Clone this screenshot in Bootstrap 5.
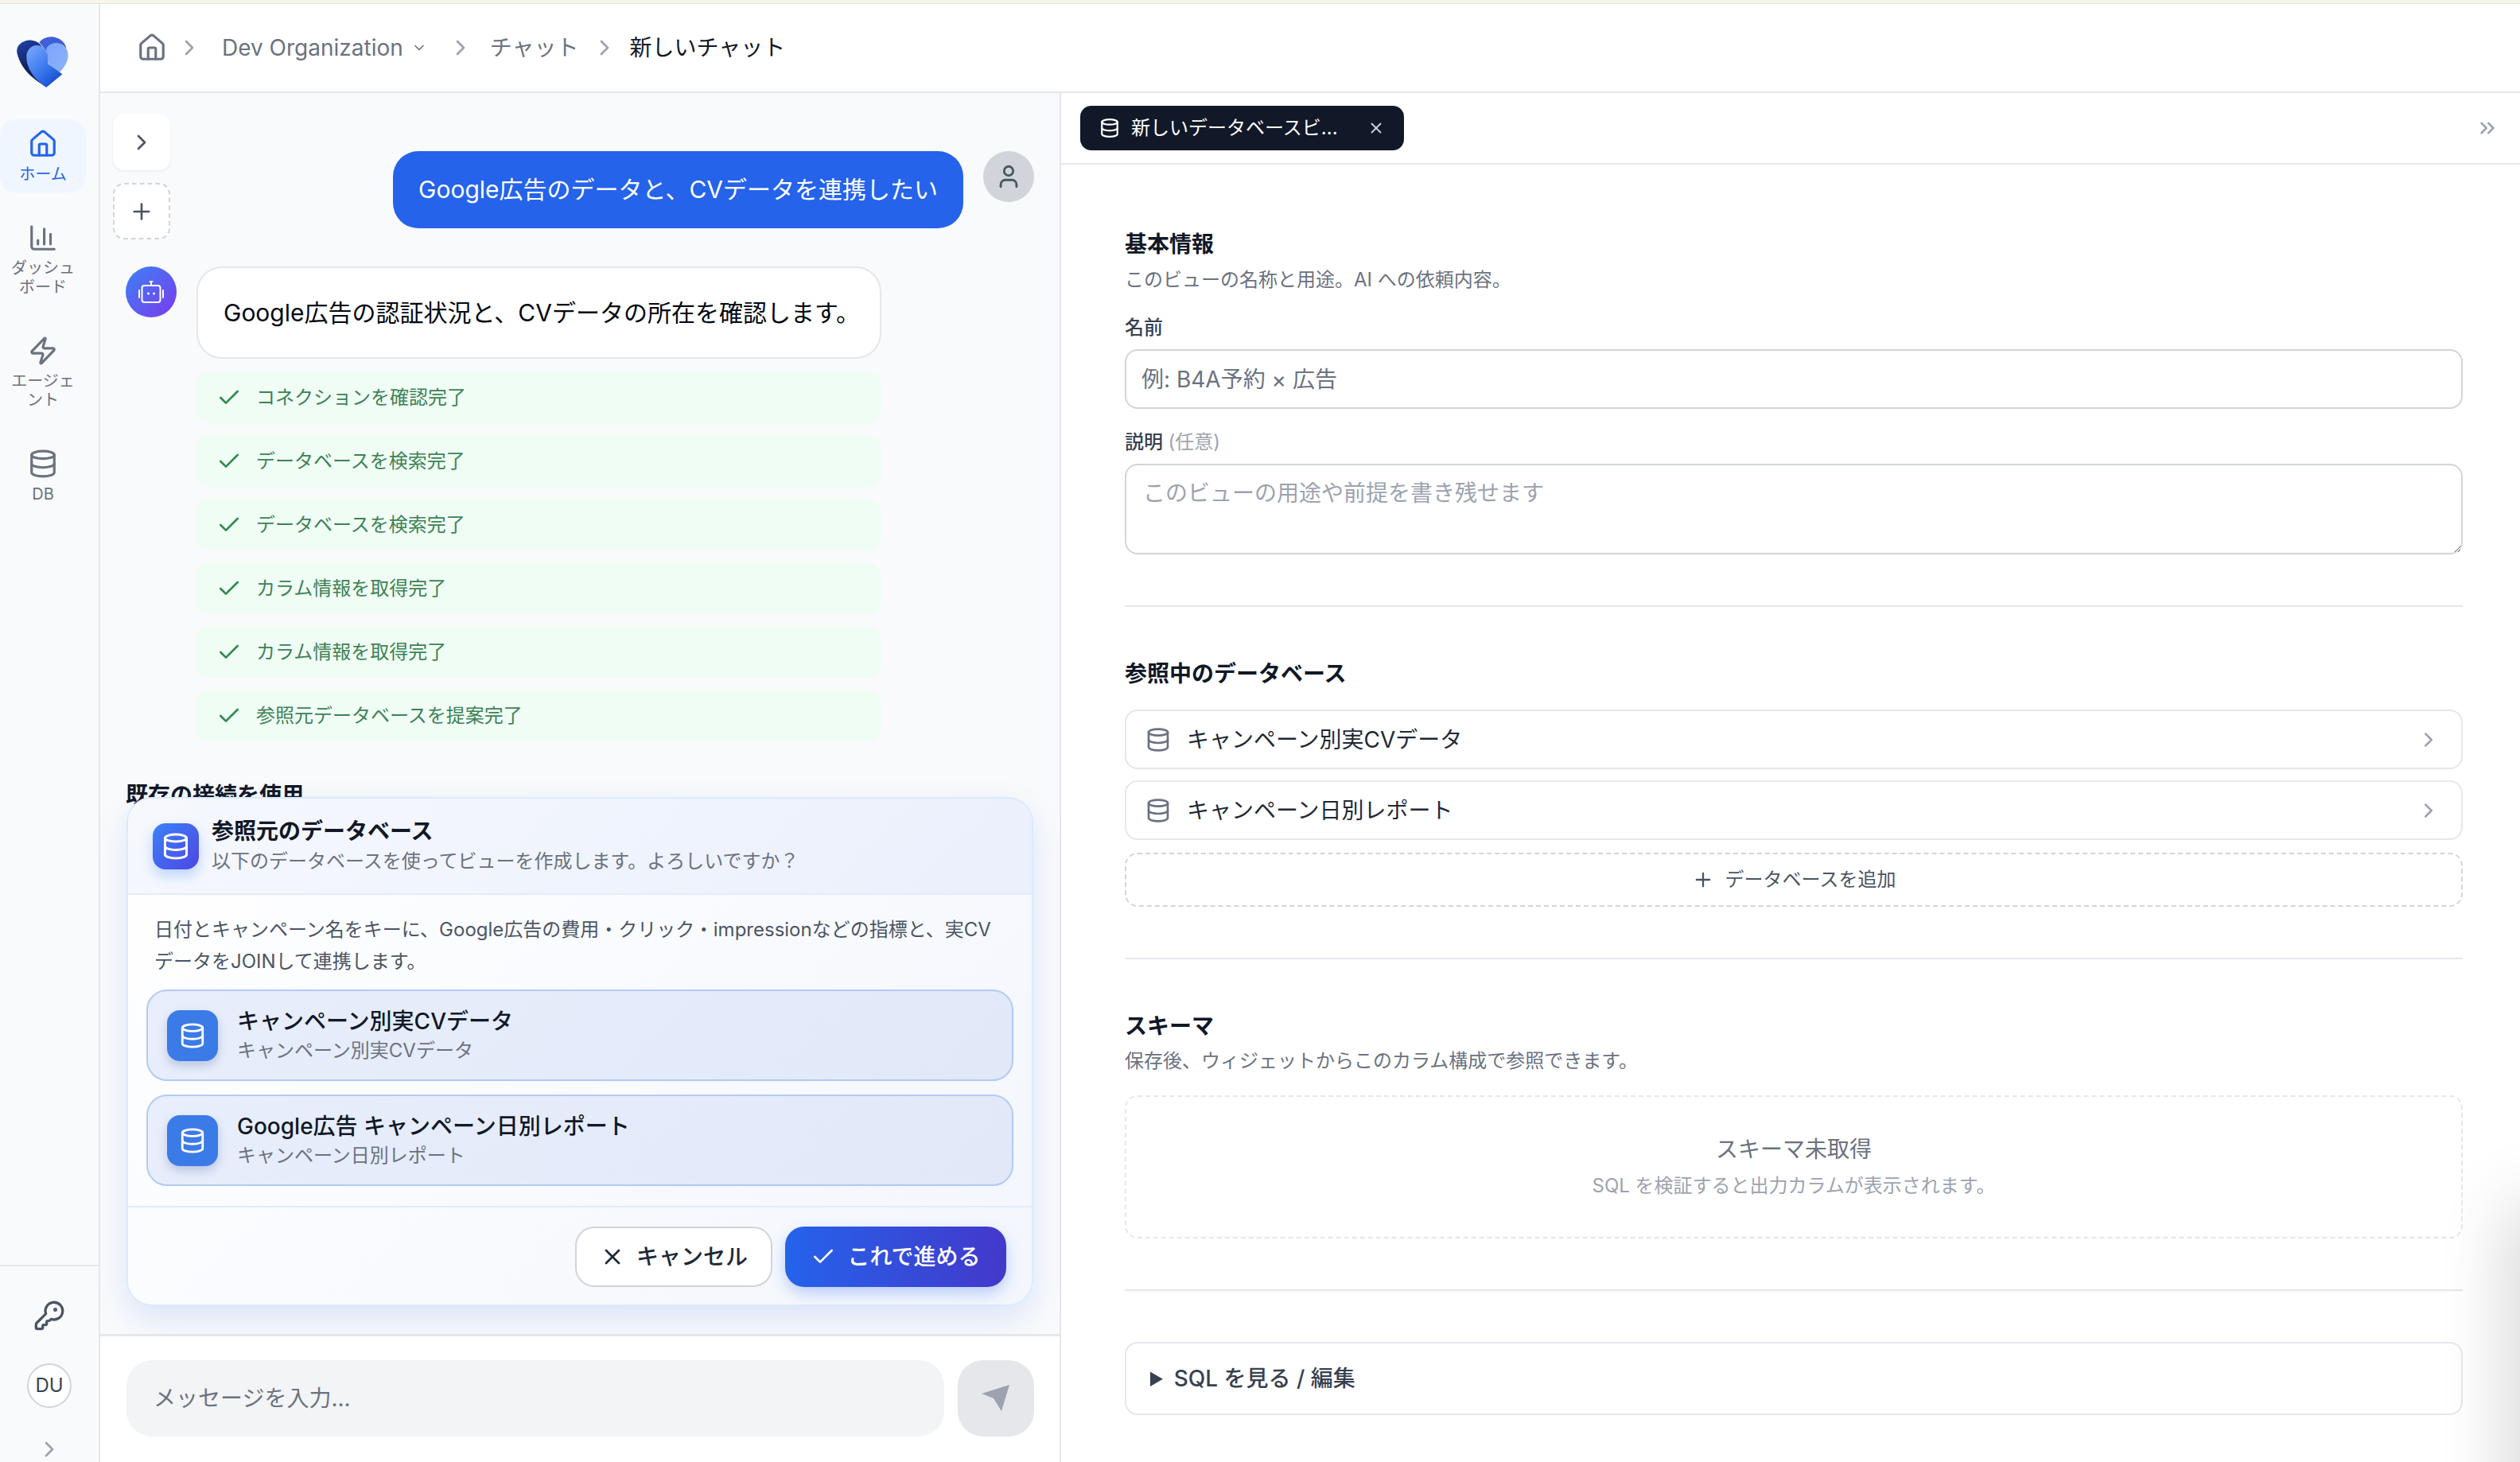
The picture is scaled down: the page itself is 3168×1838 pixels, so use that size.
<!DOCTYPE html>
<html lang="ja">
<head>
  <meta charset="UTF-8" />
  <meta name="viewport" content="width=device-width, initial-scale=1.0" />
  <title>新しいチャット</title>
  <link href="https://cdn.jsdelivr.net/npm/bootstrap@5.3.3/dist/css/bootstrap.min.css" rel="stylesheet">
  <style>
    html, body { height: 100%; }
    body { font-family: Inter, "Noto Sans CJK JP", sans-serif; color: #111827; background: #fff; overflow: hidden; font-size: 28px; }
    svg.ico { fill: none; stroke: currentColor; stroke-width: 2; stroke-linecap: round; stroke-linejoin: round; flex: none; }

    .top-strip { height: 5px; background: #f6f7ea; border-bottom: 1px solid #e3e4d4; flex: none; }
    .app-shell { height: 1833px; }

    /* left rail */
    .side-rail { width: 126px; flex: none; background: #f9fafb; border-right: 2px solid #e5e7eb; }
    .rail-logo { height: 145px; padding: 31px 0 0 10px; }
    .rail-nav { gap: 26px; }
    .rail-link { width: 108px; padding: 14px 12px 11px; gap: 9px; border-radius: 20px; color: #6b7280; font-size: 20px; line-height: 24px; text-align: center; text-decoration: none; }
    .rail-link.is-active { background: #eff6ff; color: #2563eb; }
    .rail-foot { border-top: 2px solid #e5e7eb; padding-top: 42px; color: #4b5563; }
    .rail-avatar { width: 56px; height: 56px; border: 2px solid #d1d5db; background: #fff; border-radius: 50%; font-size: 24px; color: #374151; margin: 40px 0 36px; }
    .rail-more { color: #9ca3af; }

    /* header */
    .page-head { height: 112px; flex: none; background: #fff; border-bottom: 2px solid #e5e7eb; padding-left: 46px; color: #6b7280; }
    .crumb-sep { color: #9ca3af; }
    .crumb-now { color: #111827; }
    .crumb-a { margin: 0 25px 0 12px; }
    .crumb-b { margin: 0 21px 0 26px; }
    .crumb-c { margin: 0 16px; }
    .crumb-caret { margin-left: 10px; }

    /* chat pane */
    .chat-pane { width: 1208px; flex: none; border-right: 2px solid #e5e7eb; background: #f9fafb; }
    .chat-scroll { padding: 73px 32px 0; overflow: hidden; }
    .float-btn { position: absolute; left: 16px; width: 72px; height: 71px; background: #fff; border-radius: 14px; color: #4b5563; box-shadow: 0 1px 3px rgba(0,0,0,.08); }
    .float-toggle { top: 26px; }
    .float-add { top: 113px; border: 2px dashed #d1d5db; box-shadow: none; }
    .user-row { gap: 25px; margin-bottom: 48px; }
    .user-bubble { height: 97px; padding: 0 32px; background: #2563eb; color: #fff; border-radius: 32px; font-size: 30px; white-space: nowrap; }
    .round-face { width: 64px; height: 64px; border-radius: 50%; flex: none; }
    .face-user { background: #d1d5db; color: #4b5563; }
    .face-bot { background: linear-gradient(135deg, #3b82f6, #7c3aed); color: #fff; }
    .bot-col { width: 861px; margin-left: 25px; }
    .bot-bubble { height: 116px; padding: 0 32px; background: #fff; border: 2px solid #e5e7eb; border-radius: 32px; font-size: 30px; color: #030712; white-space: nowrap; margin-bottom: 17px; }
    .step-row { height: 64px; margin-bottom: 16px; padding-left: 25px; gap: 18px; background: #f0fdf4; border-radius: 16px; font-size: 24px; color: #3d8257; }
    .step-row svg { color: #2e8b4f; }
    .used-label { font-size: 28px; font-weight: 700; line-height: 42px; margin-top: 31px; }

    /* proposal card */
    .pick-card { position: absolute; left: 33px; right: 33px; bottom: 35px; height: 640px; border: 2px solid #dbeafe; border-radius: 32px; overflow: visible; background: linear-gradient(135deg, #fff, #f3f6fd); box-shadow: 0 16px 40px rgba(37,99,235,.14); }
    .pick-head { height: 121px; padding: 0 31px; gap: 16px; flex: none; border-bottom: 2px solid #e3ebfb; border-radius: 30px 30px 0 0; background: linear-gradient(135deg, #f6f8fe, #eaf0fc); }
    .pick-badge { width: 58px; height: 58px; border-radius: 16px; flex: none; color: #fff; background: linear-gradient(135deg, #3b82f6, #4f46e5); box-shadow: 0 8px 16px rgba(59,130,246,.3); }
    .pick-title { font-size: 28px; font-weight: 700; line-height: 38px; }
    .pick-sub { font-size: 24px; line-height: 38px; color: #6b7280; }
    .pick-desc { font-size: 24px; line-height: 40px; color: #4b5563; margin: 24px 0 15px 10px; width: 1075px; }
    .pick-body { padding: 0 23px; }
    .source-row { height: 115px; margin-bottom: 17px; padding: 0 24px; gap: 24px; border: 2px solid #b2cbf6; border-radius: 26px; background: linear-gradient(135deg, #e8eefb, #e1e8f8); }
    .source-badge { width: 64px; height: 64px; border-radius: 16px; flex: none; color: #fff; background: #3b7be8; box-shadow: 0 6px 12px rgba(30,58,138,.22); }
    .source-name { font-size: 28px; line-height: 38px; font-weight: 500; color: #111827; }
    .source-sub { font-size: 24px; line-height: 36px; color: #6b7280; }
    .pick-foot { margin-top: 8px; padding: 24px 32px; gap: 16px; border-top: 2px solid #e3ebfb; }
    .btn.pick-cancel, .btn.pick-go { height: 76px; font-size: 28px; font-weight: 500; border-radius: 24px; padding: 0; gap: 14px; }
    .btn.pick-cancel { width: 248px; background: #fff; border: 2px solid #d1d5db; color: #1f2937; }
    .btn.pick-go { width: 278px; border: 0; color: #fff; background: linear-gradient(90deg, #2563eb, #4338ca); box-shadow: 0 8px 18px rgba(37,99,235,.28); }

    /* composer */
    .composer { height: 161px; flex: none; padding: 30px 32px 0 33px; gap: 17px; background: #fff; border-top: 3px solid #e5e7eb; }
    .form-control.composer-input { height: 96px; border: 0; border-radius: 32px; background: #f3f4f6; font-size: 28px; padding: 0 34px; }
    .composer-input::placeholder { color: #6b7280; }
    .composer-send { width: 96px; height: 96px; flex: none; border-radius: 32px; background: #e5e7eb; }

    /* right pane */
    .view-pane { background: #fff; }
    .tab-bar { height: 90px; flex: none; padding: 0 26px 0 24px; border-bottom: 2px solid #e5e7eb; color: #9ca3af; }
    .view-tab { width: 407px; height: 56px; padding: 0 24px; background: #111827; color: #fff; border-radius: 14px; font-size: 24px; gap: 14px; }
    .view-tab-x { color: #d1d5db; margin-left: auto; }
    .view-body { padding: 16px 72px 0 80px; }
    .form-block { padding: 64px 0; border-bottom: 2px solid #e5e7eb; }
    .block-title { font-size: 28px; font-weight: 700; line-height: 40px; margin: 0; color: #111827; }
    .block-sub { font-size: 24px; line-height: 36px; color: #6b7280; margin: 7px 0 0; }
    .form-label.field-label { font-size: 24px; line-height: 36px; color: #374151; font-weight: 500; margin: 24px 0 9px; }
    .field-opt { color: #9ca3af; font-weight: 400; }
    .form-control.field-input { border: 2px solid #d1d5db; border-radius: 16px; font-size: 28px; height: 75px; padding: 0 19px; color: #111827; }
    .form-control.field-area { height: 114px; padding: 14px 21px; }
    .field-input::placeholder { color: #6b7280; }
    .field-area::placeholder { color: #9ca3af; }
    .db-list { margin-top: 25px; gap: 14px; }
    .db-row { height: 75px; padding: 0 26px 0 24px; gap: 20px; border: 2px solid #e5e7eb; border-radius: 16px; font-size: 28px; color: #1f2937; background: #fff; }
    .db-row > svg:first-child { color: #6b7280; }
    .db-chev { color: #9ca3af; margin-left: auto; }
    .db-add { height: 68px; margin-top: 16px; gap: 14px; border: 2px dashed #d1d5db; border-radius: 16px; font-size: 24px; color: #4b5563; }
    .schema-empty { height: 180px; margin-top: 25px; border: 2px dashed #e5e7eb; border-radius: 16px; }
    .schema-none { font-size: 28px; line-height: 40px; color: #6b7280; }
    .schema-hint { font-size: 24px; line-height: 36px; margin-top: 8px; color: #9ca3af; }
    .sql-box { margin-top: 64px; height: 92px; padding: 0 30px; border: 2px solid #e5e7eb; border-radius: 16px; font-size: 28px; font-weight: 500; color: #374151; line-height: 88px; }
    .edge-shade { position: absolute; right: -40px; top: 1400px; bottom: -200px; width: 40px; box-shadow: 0 0 90px rgba(0,0,0,.3); }
  </style>
</head>
<body class="d-flex flex-column">
<div class="top-strip"></div>
<div class="app-shell d-flex">

  <!-- Rail -->
  <aside class="side-rail d-flex flex-column">
    <div class="rail-logo">
      <svg width="90" height="84" viewBox="0 0 270 252">
        <defs>
          <linearGradient id="lgDark" x1="0.2" y1="0" x2="0.6" y2="1"><stop offset="0" stop-color="#1e3fa8"/><stop offset="0.5" stop-color="#13265f"/><stop offset="1" stop-color="#0f1d4a"/></linearGradient>
          <linearGradient id="lgFront" x1="0.1" y1="0.1" x2="0.8" y2="1"><stop offset="0" stop-color="#6fa2fb"/><stop offset="0.6" stop-color="#3470ea"/><stop offset="1" stop-color="#0f46c4"/></linearGradient>
          <linearGradient id="lgRight" x1="0" y1="0" x2="1" y2="1"><stop offset="0" stop-color="#7aa5f9"/><stop offset="1" stop-color="#8fb3fc"/></linearGradient>
        </defs>
        <path fill="#3f5fd8" d="M118 52C130 35 160 25 185 35C205 42 215 55 220 72L150 90Z"/>
        <path fill="url(#lgDark)" d="M34 90C30 60 60 42 90 44C110 46 122 58 130 70L150 130L145 220C110 200 48 160 34 90Z"/>
        <path fill="url(#lgRight)" d="M145 74C165 42 225 48 227 100C228 125 210 150 192 168L150 130Z"/>
        <path fill="url(#lgFront)" d="M70 110C68 80 90 60 112 63C135 66 150 85 150 105L150 132L205 172L145 221C120 205 72 165 70 110Z"/>
      </svg>
    </div>
    <nav class="rail-nav d-flex flex-column">
      <a class="rail-link is-active d-flex flex-column align-items-center" href="#">
        <svg class="ico" width="38" height="38" viewBox="0 0 24 24" style="margin:-2px 0"><path d="M15 21v-8a1 1 0 0 0-1-1h-4a1 1 0 0 0-1 1v8"/><path d="M3 10a2 2 0 0 1 .709-1.528l7-5.999a2 2 0 0 1 2.582 0l7 5.999A2 2 0 0 1 21 10v9a2 2 0 0 1-2 2H5a2 2 0 0 1-2-2z"/></svg>
        <span>ホーム</span>
      </a>
      <a class="rail-link d-flex flex-column align-items-center" href="#">
        <svg class="ico" width="38" height="38" viewBox="0 0 24 24" style="margin:-2px 0"><path d="M3 3v16a2 2 0 0 0 2 2h16"/><path d="M18 17V9"/><path d="M13 17V5"/><path d="M8 17v-3"/></svg>
        <span>ダッシュボード</span>
      </a>
      <a class="rail-link d-flex flex-column align-items-center" href="#">
        <svg class="ico" width="38" height="38" viewBox="0 0 24 24" style="margin:-2px 0"><path d="M4 14a1 1 0 0 1-.78-1.63l9.9-10.2a.5.5 0 0 1 .86.46l-1.92 6.02A1 1 0 0 0 13 10h7a1 1 0 0 1 .78 1.63l-9.9 10.2a.5.5 0 0 1-.86-.46l1.92-6.02A1 1 0 0 0 11 14z"/></svg>
        <span>エージェント</span>
      </a>
      <a class="rail-link d-flex flex-column align-items-center" href="#">
        <svg class="ico" width="38" height="38" viewBox="0 0 24 24" style="margin:-2px 0"><ellipse cx="12" cy="5" rx="9" ry="3"/><path d="M3 5v14a9 3 0 0 0 18 0V5"/><path d="M3 12a9 3 0 0 0 18 0"/></svg>
        <span>DB</span>
      </a>
    </nav>
    <div class="rail-foot mt-auto d-flex flex-column align-items-center">
      <svg class="ico" width="40" height="40" viewBox="0 0 24 24"><path d="M2.586 17.414A2 2 0 0 0 2 18.828V21a1 1 0 0 0 1 1h3a1 1 0 0 0 1-1v-1a1 1 0 0 1 1-1h1a1 1 0 0 0 1-1v-1a1 1 0 0 1 1-1h.172a2 2 0 0 0 1.414-.586l.814-.814a6.5 6.5 0 1 0-4-4z"/><circle cx="16.5" cy="7.5" r=".5" fill="currentColor"/></svg>
      <div class="rail-avatar d-flex align-items-center justify-content-center">DU</div>
      <svg class="ico rail-more" width="32" height="32" viewBox="0 0 24 24"><path d="m9 18 6-6-6-6"/></svg>
    </div>
  </aside>

  <main class="flex-grow-1 d-flex flex-column" style="min-width:0">
    <!-- Breadcrumb -->
    <header class="page-head d-flex align-items-center">
      <svg class="ico" width="38" height="38" viewBox="0 0 24 24" stroke-width="1.6"><path d="M15 21v-8a1 1 0 0 0-1-1h-4a1 1 0 0 0-1 1v8"/><path d="M3 10a2 2 0 0 1 .709-1.528l7-5.999a2 2 0 0 1 2.582 0l7 5.999A2 2 0 0 1 21 10v9a2 2 0 0 1-2 2H5a2 2 0 0 1-2-2z"/></svg>
      <svg class="ico crumb-sep crumb-a" width="32" height="32" viewBox="0 0 24 24"><path d="m9 18 6-6-6-6"/></svg>
      <span>Dev Organization</span>
      <svg class="ico crumb-caret" width="20" height="20" viewBox="0 0 24 24"><path d="m6 9 6 6 6-6"/></svg>
      <svg class="ico crumb-sep crumb-b" width="32" height="32" viewBox="0 0 24 24"><path d="m9 18 6-6-6-6"/></svg>
      <span>チャット</span>
      <svg class="ico crumb-sep crumb-c" width="32" height="32" viewBox="0 0 24 24"><path d="m9 18 6-6-6-6"/></svg>
      <span class="crumb-now">新しいチャット</span>
    </header>

    <div class="flex-grow-1 d-flex" style="min-height:0">
      <!-- Chat -->
      <section class="chat-pane d-flex flex-column">
        <div class="chat-scroll flex-grow-1 position-relative">
          <div class="float-btn float-toggle d-flex align-items-center justify-content-center">
            <svg class="ico" width="32" height="32" viewBox="0 0 24 24"><path d="m9 18 6-6-6-6"/></svg>
          </div>
          <div class="float-btn float-add d-flex align-items-center justify-content-center">
            <svg class="ico" width="32" height="32" viewBox="0 0 24 24"><path d="M5 12h14"/><path d="M12 5v14"/></svg>
          </div>

          <div class="user-row d-flex justify-content-end">
            <div class="user-bubble d-flex align-items-center">Google広告のデータと、CVデータを連携したい</div>
            <div class="round-face face-user d-flex align-items-center justify-content-center">
              <svg class="ico" width="34" height="34" viewBox="0 0 24 24" stroke-width="1.6"><path d="M19 21v-2a4 4 0 0 0-4-4H9a4 4 0 0 0-4 4v2"/><circle cx="12" cy="7" r="4"/></svg>
            </div>
          </div>

          <div class="d-flex">
            <div class="round-face face-bot d-flex align-items-center justify-content-center">
              <svg class="ico" width="32" height="32" viewBox="0 0 32 32"><rect x="4.5" y="8" width="23" height="21" rx="3"/><path d="M16 8V3"/><path d="M14 3h4" stroke-width="1.5"/><path d="M1 14v9"/><path d="M31 14v9"/><circle cx="12.5" cy="18" r="1.5" fill="currentColor" stroke="none"/><circle cx="19.5" cy="18" r="1.5" fill="currentColor" stroke="none"/></svg>
            </div>
            <div class="bot-col">
              <div class="bot-bubble d-flex align-items-center">Google広告の認証状況と、CVデータの所在を確認します。</div>
              <div class="step-row d-flex align-items-center"><svg class="ico" width="32" height="32" viewBox="0 0 24 24"><path d="M20 6 9 17l-5-5"/></svg>コネクションを確認完了</div>
              <div class="step-row d-flex align-items-center"><svg class="ico" width="32" height="32" viewBox="0 0 24 24"><path d="M20 6 9 17l-5-5"/></svg>データベースを検索完了</div>
              <div class="step-row d-flex align-items-center"><svg class="ico" width="32" height="32" viewBox="0 0 24 24"><path d="M20 6 9 17l-5-5"/></svg>データベースを検索完了</div>
              <div class="step-row d-flex align-items-center"><svg class="ico" width="32" height="32" viewBox="0 0 24 24"><path d="M20 6 9 17l-5-5"/></svg>カラム情報を取得完了</div>
              <div class="step-row d-flex align-items-center"><svg class="ico" width="32" height="32" viewBox="0 0 24 24"><path d="M20 6 9 17l-5-5"/></svg>カラム情報を取得完了</div>
              <div class="step-row d-flex align-items-center"><svg class="ico" width="32" height="32" viewBox="0 0 24 24"><path d="M20 6 9 17l-5-5"/></svg>参照元データベースを提案完了</div>
            </div>
          </div>
          <div class="used-label">既存の接続を使用</div>

          <!-- Proposal sits over the chat log -->
          <div class="card pick-card">
            <div class="pick-head d-flex align-items-center">
              <div class="pick-badge d-flex align-items-center justify-content-center">
                <svg class="ico" width="36" height="36" viewBox="0 0 24 24"><ellipse cx="12" cy="5" rx="9" ry="3"/><path d="M3 5v14a9 3 0 0 0 18 0V5"/><path d="M3 12a9 3 0 0 0 18 0"/></svg>
              </div>
              <div>
                <div class="pick-title">参照元のデータベース</div>
                <div class="pick-sub">以下のデータベースを使ってビューを作成します。よろしいですか？</div>
              </div>
            </div>
            <div class="pick-body">
              <p class="pick-desc">日付とキャンペーン名をキーに、Google広告の費用・クリック・impressionなどの指標と、実CVデータをJOINして連携します。</p>
              <div class="source-row d-flex align-items-center">
                <div class="source-badge d-flex align-items-center justify-content-center">
                  <svg class="ico" width="34" height="34" viewBox="0 0 24 24"><ellipse cx="12" cy="5" rx="9" ry="3"/><path d="M3 5v14a9 3 0 0 0 18 0V5"/><path d="M3 12a9 3 0 0 0 18 0"/></svg>
                </div>
                <div>
                  <div class="source-name">キャンペーン別実CVデータ</div>
                  <div class="source-sub">キャンペーン別実CVデータ</div>
                </div>
              </div>
              <div class="source-row d-flex align-items-center">
                <div class="source-badge d-flex align-items-center justify-content-center">
                  <svg class="ico" width="34" height="34" viewBox="0 0 24 24"><ellipse cx="12" cy="5" rx="9" ry="3"/><path d="M3 5v14a9 3 0 0 0 18 0V5"/><path d="M3 12a9 3 0 0 0 18 0"/></svg>
                </div>
                <div>
                  <div class="source-name">Google広告 キャンペーン日別レポート</div>
                  <div class="source-sub">キャンペーン日別レポート</div>
                </div>
              </div>
            </div>
            <div class="pick-foot d-flex justify-content-end">
              <button class="btn pick-cancel d-flex align-items-center justify-content-center" type="button"><svg class="ico" width="32" height="32" viewBox="0 0 24 24"><path d="M18 6 6 18"/><path d="m6 6 12 12"/></svg>キャンセル</button>
              <button class="btn pick-go d-flex align-items-center justify-content-center" type="button"><svg class="ico" width="32" height="32" viewBox="0 0 24 24"><path d="M20 6 9 17l-5-5"/></svg>これで進める</button>
            </div>
          </div>
        </div>

        <div class="composer d-flex">
          <input class="form-control composer-input" type="text" placeholder="メッセージを入力...">
          <div class="composer-send d-flex align-items-center justify-content-center">
            <svg width="36" height="34" viewBox="0 0 36 34"><path fill="#9ca3af" d="M35 0 0 11l15 6 10 16Z"/></svg>
          </div>
        </div>
      </section>

      <!-- View editor -->
      <section class="view-pane flex-grow-1 d-flex flex-column position-relative" style="min-width:0">
        <div class="tab-bar d-flex align-items-center justify-content-between">
          <div class="view-tab d-flex align-items-center">
            <svg class="ico" width="26" height="26" viewBox="0 0 24 24"><ellipse cx="12" cy="5" rx="9" ry="3"/><path d="M3 5v14a9 3 0 0 0 18 0V5"/><path d="M3 12a9 3 0 0 0 18 0"/></svg>
            <span>新しいデータベースビ...</span>
            <svg class="ico view-tab-x" width="22" height="22" viewBox="0 0 24 24"><path d="M18 6 6 18"/><path d="m6 6 12 12"/></svg>
          </div>
          <svg class="ico" width="30" height="30" viewBox="0 0 24 24"><path d="m6 17 5-5-5-5"/><path d="m13 17 5-5-5-5"/></svg>
        </div>
        <div class="view-body">
          <div class="form-block">
            <h2 class="block-title">基本情報</h2>
            <p class="block-sub">このビューの名称と用途。AI への依頼内容。</p>
            <label class="form-label field-label d-block">名前</label>
            <input class="form-control field-input" type="text" placeholder="例: B4A予約 × 広告">
            <label class="form-label field-label d-block">説明 <span class="field-opt">(任意)</span></label>
            <textarea class="form-control field-input field-area" placeholder="このビューの用途や前提を書き残せます"></textarea>
          </div>
          <div class="form-block">
            <h2 class="block-title">参照中のデータベース</h2>
            <div class="db-list d-flex flex-column">
              <div class="db-row d-flex align-items-center">
                <svg class="ico" width="32" height="32" viewBox="0 0 24 24"><ellipse cx="12" cy="5" rx="9" ry="3"/><path d="M3 5v14a9 3 0 0 0 18 0V5"/><path d="M3 12a9 3 0 0 0 18 0"/></svg>
                キャンペーン別実CVデータ
                <svg class="ico db-chev" width="30" height="30" viewBox="0 0 24 24"><path d="m9 18 6-6-6-6"/></svg>
              </div>
              <div class="db-row d-flex align-items-center">
                <svg class="ico" width="32" height="32" viewBox="0 0 24 24"><ellipse cx="12" cy="5" rx="9" ry="3"/><path d="M3 5v14a9 3 0 0 0 18 0V5"/><path d="M3 12a9 3 0 0 0 18 0"/></svg>
                キャンペーン日別レポート
                <svg class="ico db-chev" width="30" height="30" viewBox="0 0 24 24"><path d="m9 18 6-6-6-6"/></svg>
              </div>
            </div>
            <div class="db-add d-flex align-items-center justify-content-center">
              <svg class="ico" width="28" height="28" viewBox="0 0 24 24"><path d="M5 12h14"/><path d="M12 5v14"/></svg>
              データベースを追加
            </div>
          </div>
          <div class="form-block">
            <h2 class="block-title">スキーマ</h2>
            <p class="block-sub" style="margin-top:6px">保存後、ウィジェットからこのカラム構成で参照できます。</p>
            <div class="schema-empty d-flex flex-column align-items-center justify-content-center">
              <div class="schema-none">スキーマ未取得</div>
              <div class="schema-hint">SQL を検証すると出力カラムが表示されます。</div>
            </div>
          </div>
          <details class="sql-box"><summary>SQL を見る / 編集</summary></details>
        </div>
        <div class="edge-shade"></div>
      </section>
    </div>
  </main>
</div>
</body>
</html>
